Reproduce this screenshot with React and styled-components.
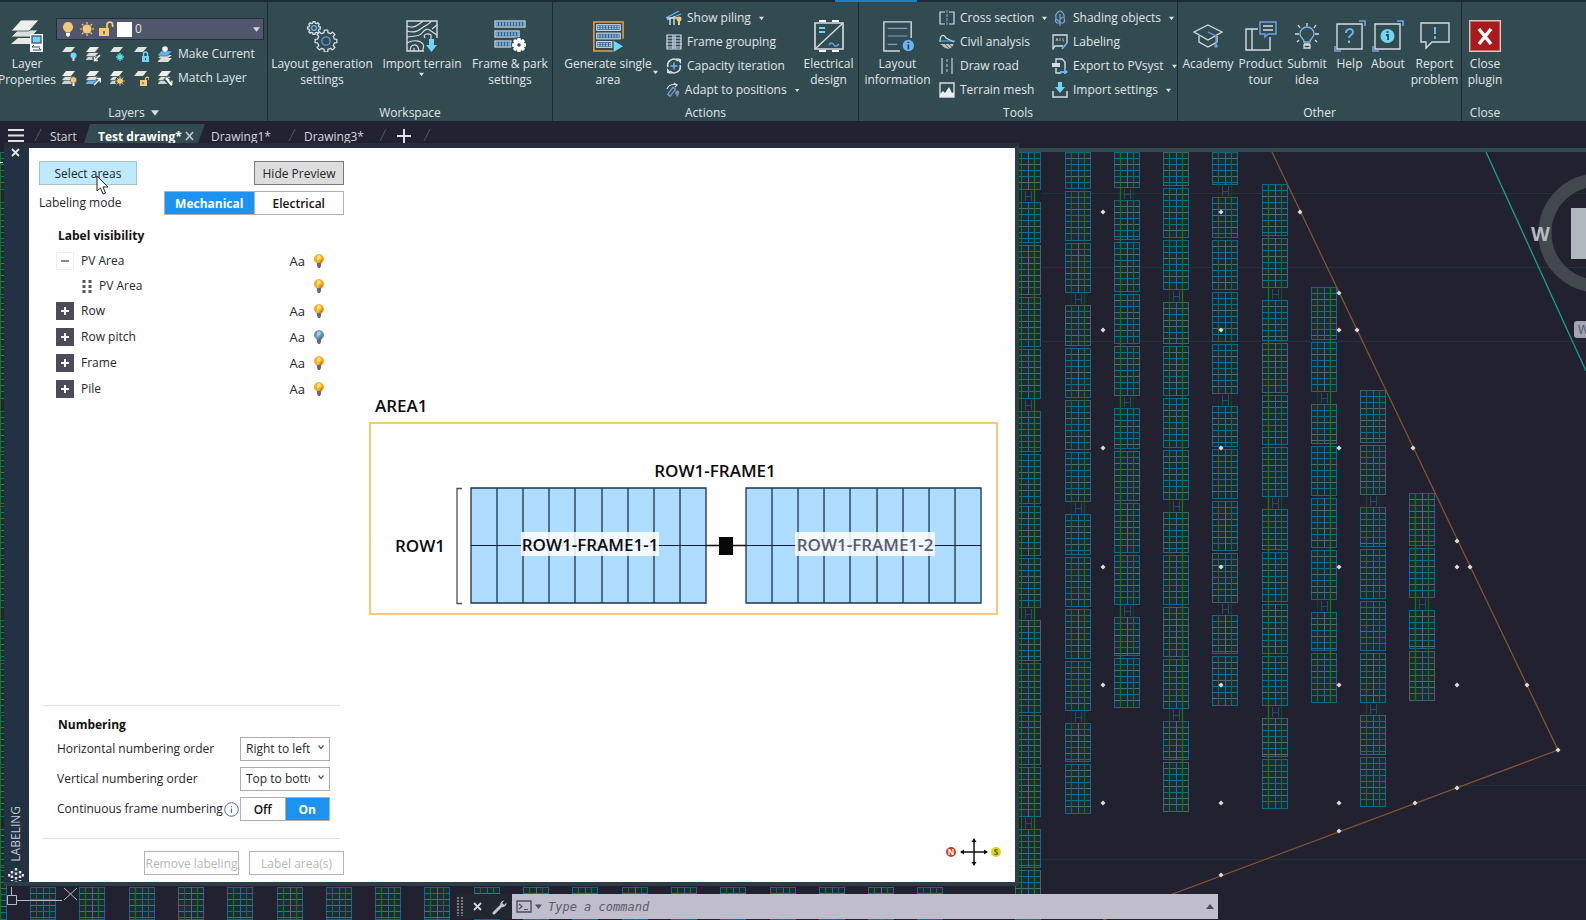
import React, { useState } from 'react';
import styled, { createGlobalStyle, css } from 'styled-components';

const GlobalStyle = createGlobalStyle`
    * {
        box-sizing: border-box;
    }

    body {
        margin: 0;
        background: #21212f;
        font-family: 'Open Sans', 'Noto Sans', sans-serif;
        font-size: 12px;
        line-height: 16px;
    }

    button, select, input {
        font: inherit;
        color: inherit;
        margin: 0;
    }
`;

/* ---------- icons ---------- */

const W = '#d5dce4';
const B = '#68b5f5';
const SKY = '#6fd6f5';
const AMBER = '#f3c877';

const Svg = ({ size = 16, children, ...rest }) => (
    <svg width={size} height={size} viewBox={`0 0 ${size} ${size}`} fill="none" aria-hidden="true" {...rest}>
        {children}
    </svg>
);

const Caret = ({ size = 5, color = '#d5dce4' }) => (
    <svg width={size} height={size} viewBox="0 0 6 6" aria-hidden="true">
        <path d="M0 1h6L3 5z" fill={color} />
    </svg>
);

const Sheet = ({ y = 1, fill = '#e3e3e1' }) => <path d={`M5 ${y}h9l-4 5H1z`} fill={fill} />;

const Sheets = ({ blue }) => (
    <>
        <path d="M1 13l3-3h10l-4 4H1z" fill={blue ? B : '#cfcfcc'} />
        <path d="M1 9.500l3-3h10l-4 4H1z" fill="#dcdcd8" stroke="#324b50" strokeWidth=".6" />
        <Sheet fill="#eeeeea" />
    </>
);

const Gear = ({ cx, cy, r, color, inner, fill = 'none' }) => (
    <g stroke={color} fill={fill} strokeWidth="1.300" strokeLinejoin="round">
        <path
            d={Array.from({ length: 8 }, (_, i) => {
                const at = (deg, rad) => {
                    const a = (deg * Math.PI) / 180;
                    return `${(cx + rad * Math.cos(a)).toFixed(2)} ${(cy + rad * Math.sin(a)).toFixed(2)}`;
                };
                const d = i * 45;
                return `${i ? 'L' : 'M'}${at(d - 13, r * 0.78)}L${at(d - 9, r)}L${at(d + 9, r)}L${at(d + 13, r * 0.78)}`;
            }).join('') + 'Z'}
        />
        <circle cx={cx} cy={cy} r={r * 0.38} stroke={inner} fill={fill === 'none' ? 'none' : '#324b50'} />
    </g>
);

const PanelStrip = ({ x, y, w }) => (
    <>
        <rect x={x} y={y} width={w} height="6" fill="#2f6088" stroke={W} strokeWidth="1.200" />
        <path d={`M${x + 1} ${y + 3}h${w - 2}`} stroke="#9fd0f5" strokeWidth="3" strokeDasharray="2 1" />
        <path d={`M${x + 1} ${y + 3}h${w - 2}`} stroke="#2f6088" strokeWidth=".7" />
    </>
);

const icons = {
    layerProps: (
        <Svg size={32}>
            <path d="M0 24l7-6h20l-6 6z" fill="#e8e8e4" />
            <path d="M0 17l7-7h20l-7 7z" fill="#dededa" stroke="#324b50" strokeWidth=".8" />
            <path d="M0 11L10 0h18L18 11z" fill="#eeeeea" stroke="#324b50" strokeWidth=".8" />
            <rect x="19" y="14" width="13" height="18" fill="#f8fafa" />
            <rect x="21" y="16" width="9" height="7" fill={SKY} stroke="#34475c" strokeWidth="1.200" />
            <path d="M21 27h8M23 25l-2 2M22 30h8M28 28l2 2" stroke="#34475c" />
        </Svg>
    ),
    bulb: (
        <Svg>
            <path d="M8 1a5 5 0 0 1 3 9l-1 1.500H6L5 10a5 5 0 0 1 3-9z" fill={AMBER} />
            <path d="M6 12h4v2.500L8 16l-2-1.500z" fill="#f4f4f4" />
        </Svg>
    ),
    sun: (
        <Svg>
            <circle cx="8" cy="8" r="4.500" fill={AMBER} />
            <path d="M8 1v2M8 13v2M1 8h2M13 8h2M3 3l1.500 1.500M11.500 11.500L13 13M13 3l-1.500 1.500M4.500 11.500L3 13" stroke={AMBER} strokeWidth="1.200" />
        </Svg>
    ),
    unlock: (
        <Svg>
            <rect x="1" y="7" width="10" height="8" fill={AMBER} />
            <path d="M9 7V4a2.800 2.800 0 0 1 5.600 0v2" stroke={AMBER} strokeWidth="1.800" />
            <path d="M6 10v3" stroke="#4a5068" strokeWidth="1.500" />
        </Svg>
    ),
    layerOff: (
        <Svg>
            <Sheet />
            <circle cx="12.500" cy="9.500" r="3" fill={SKY} />
            <path d="M11.500 12h2v3h-2z" fill={W} />
        </Svg>
    ),
    layerIso: (
        <Svg>
            <Sheets />
            <path d="M15 9l-5 5M9 11v4h4" stroke="#324b50" strokeWidth="3" />
            <path d="M15 9l-5 5M9.500 11v3.500H13" stroke="#fff" strokeWidth="1.500" />
        </Svg>
    ),
    layerFreeze: (
        <Svg>
            <Sheet />
            <path d="M11 7v8M7 11h8M8.500 8.500l5 5M13.500 8.500l-5 5" stroke="#5fe0e0" strokeWidth="1.400" />
        </Svg>
    ),
    layerLock: (
        <Svg>
            <Sheet />
            <rect x="9" y="10" width="7" height="6" fill={SKY} />
            <path d="M10.500 10V8a2 2 0 0 1 4 0v2" stroke={SKY} strokeWidth="1.400" />
            <path d="M12.500 12v2" stroke="#324b50" />
        </Svg>
    ),
    makeCurrent: (
        <Svg>
            <path d="M1 15l3-3h11l-4 4H1zM1 12l3-3h11l-4 3z" fill="#dcdcd8" />
            <path d="M1 9l3-4h11l-4 5H1z" fill="#5eb3f0" stroke="#324b50" strokeWidth=".5" />
            <circle cx="8" cy="3" r="2.800" fill="#f4f4f4" />
        </Svg>
    ),
    layerOn: (
        <Svg>
            <Sheets />
            <circle cx="12.500" cy="10" r="3.200" fill={AMBER} stroke="#324b50" strokeWidth=".5" />
            <path d="M11.500 13h2v3h-2z" fill="#fff" />
        </Svg>
    ),
    layerUniso: (
        <Svg>
            <Sheets blue />
            <path d="M9 15l6-6M11.500 8.500H15.500V12.500" stroke="#324b50" strokeWidth="3" />
            <path d="M9 15l6-6M11.500 8.500H15.500V12.500" stroke="#fff" strokeWidth="1.500" />
        </Svg>
    ),
    layerThaw: (
        <Svg>
            <Sheets />
            <circle cx="11" cy="11" r="5" fill="#324b50" />
            <circle cx="11" cy="11" r="2.800" fill={AMBER} />
            <path d="M11 6v10M6 11h10M7.500 7.500l7 7M14.500 7.500l-7 7" stroke={AMBER} strokeWidth=".8" />
        </Svg>
    ),
    layerUnlock: (
        <Svg>
            <Sheet />
            <rect x="7" y="10" width="7" height="6" fill={AMBER} />
            <path d="M12.500 10V8.500a1.800 1.800 0 0 1 3.500 0V10" stroke={AMBER} strokeWidth="1.200" />
            <path d="M10 12v2" stroke="#324b50" />
        </Svg>
    ),
    matchLayer: (
        <Svg>
            <Sheets />
            <path d="M8 8l6 6" stroke="#324b50" strokeWidth="5" />
            <path d="M9 8l3 3" stroke="#fff" strokeWidth="2.500" />
            <path d="M12 13l3-3 1 2-2 4z" fill={AMBER} />
            <path d="M11 11l4 4" stroke="#fff" strokeWidth="2" />
        </Svg>
    ),
    gears: (
        <Svg size={32}>
            <Gear cx={8} cy={8} r={6.5} color={W} inner={B} />
            <Gear cx={20} cy={21} r={11} color={W} inner="#5c9be0" />
        </Svg>
    ),
    terrain: (
        <Svg size={32}>
            <path d="M18 31H1V1h30v17" stroke={W} strokeWidth="1.400" />
            <path
                d="M1 6c7 3 11-1 16-5M1 11c10 3 13-2 18-5s5-3 6-5M1 17c6-1 12 0 15-4s6-5 9-2l6 4M26 9l5-4M1 23c7-4 14-2 16 1s-1 5 0 7M4 31c0-6 5-8 8-4l1 4M8 31v-3M19 18c-3-4 3-5 6-3v4"
                stroke={W}
                strokeWidth="1.200"
            />
            <path d="M23 19h5v6h3l-5.500 7L20 25h3z" fill={SKY} />
        </Svg>
    ),
    framePark: (
        <Svg size={32}>
            <PanelStrip x={1} y={1} w={30} />
            <PanelStrip x={1} y={11} w={24} />
            <PanelStrip x={1} y={21} w={16} />
            <circle cx="25" cy="25" r="8" fill="#324b50" />
            <Gear cx={25} cy={25} r={6.5} color="#fff" inner="#fff" fill="#fff" />
        </Svg>
    ),
    generate: (
        <Svg size={34}>
            <path d="M22 33H2V2h31v18" stroke="#e0a44e" strokeWidth="1.600" />
            <PanelStrip x={5} y={5} w={25} />
            <PanelStrip x={5} y={14} w={25} />
            <PanelStrip x={5} y={23} w={16} />
            <path d="M23 22l10 6-10 6z" fill={SKY} />
        </Svg>
    ),
    piling: (
        <Svg>
            <path d="M0 8L13 1M1 10L15 4" stroke={B} strokeWidth="1.300" />
            <path d="M4 8v7M8 6v9M1 8h14" stroke={W} strokeWidth="1.400" />
            <circle cx="13" cy="9" r="2.500" fill={AMBER} />
            <path d="M12 11h2v4h-2z" fill={AMBER} />
        </Svg>
    ),
    grouping: (
        <Svg>
            <path d="M1 1h6v14H1zM9 1h6v14H9zM1 4h14M1 7h14M0 10h16M1 13h14" stroke={W} strokeWidth="1.200" />
            <path d="M8 0v16" stroke={B} />
        </Svg>
    ),
    capacity: (
        <Svg>
            <path d="M2 9a6 6 0 0 1 10-6M14 7a6 6 0 0 1-10 6" stroke={W} strokeWidth="1.600" />
            <path d="M10 0l5 1v5zM6 16l-5-1v-5z" fill={W} />
            <path d="M8 4.500v7M4.500 8h7" stroke={B} strokeWidth="1.500" />
        </Svg>
    ),
    adapt: (
        <Svg>
            <path d="M1 7c2-5 6-6 11-5M9 0l4 2-3 3" stroke={W} strokeWidth="1.200" />
            <path d="M2 13l6-8 3 2-6 8z" stroke="#6f9fd8" strokeWidth="1.500" />
            <circle cx="13" cy="11" r="2.300" fill="#8c98a0" />
            <path d="M11 13h4l-2 3z" fill="#8c98a0" />
        </Svg>
    ),
    electrical: (
        <Svg size={32}>
            <path d="M2 3h28v26H2z" stroke={W} strokeWidth="1.600" />
            <path d="M6 1h7M19 1h7M6 31h7M19 31h7" stroke="#fff" strokeWidth="2" />
            <path d="M2 29L30 3" stroke={W} strokeWidth="1.400" />
            <path d="M6 8h6M6 12h6" stroke={SKY} strokeWidth="1.800" />
            <path d="M16 25c2-3 4-2 5 0s3 1 5-1" stroke="#6f9fe0" strokeWidth="1.500" />
        </Svg>
    ),
    layoutInfo: (
        <Svg size={34}>
            <path d="M19 33H2V2h29v17" stroke={W} strokeWidth="1.500" />
            <path d="M6 9h21M6 17h21M6 26h10" stroke="#7fa2cc" strokeWidth="1.300" />
            <circle cx="28" cy="27" r="6" fill={B} />
            <path d="M28 26v5M28 23v1.500" stroke="#24425c" strokeWidth="1.800" />
        </Svg>
    ),
    cross: (
        <Svg>
            <path d="M6 2H1v12h5M10 2h5v12h-5" stroke={W} strokeWidth="1.200" />
            <path d="M8 0v16" stroke={B} strokeDasharray="3 1" />
        </Svg>
    ),
    civil: (
        <Svg>
            <path d="M1 8c0-8 4-8 6-4l8 4" stroke={W} strokeWidth="1.300" />
            <path d="M0 7h16" stroke={B} />
            <path d="M1 10h14l-2 3-3 2-4-1z" fill="#b9bdc0" />
            <path d="M2 11l3 3M6 10l5 5M10 10l3 3" stroke="#324b50" strokeWidth=".7" />
        </Svg>
    ),
    road: (
        <Svg>
            <path d="M3 0v16M13 0v16" stroke="#a7b6c2" strokeWidth="1.500" />
            <path d="M8 1v14" stroke="#8fb2dd" strokeWidth="1.300" strokeDasharray="3 2" />
        </Svg>
    ),
    mesh: (
        <Svg>
            <path d="M1 1h14v14H1z" stroke={W} strokeWidth="1.400" />
            <path d="M1 15v-3l3-3 2 2 4-6 3 6 2-1v5z" fill="#e8eef0" />
        </Svg>
    ),
    tree: (
        <Svg>
            <path d="M8 16V4M8 9l3-2M8 12L4 9M5 13c-3-2-1-4-1-5s-1-3 1-5 4-3 6 0 1 4 1 5 2 3-1 5z" stroke="#7ba4d8" strokeWidth="1.200" />
        </Svg>
    ),
    labeling: (
        <Svg>
            <path d="M11 12H3l-2 3V1h14v8" stroke={W} strokeWidth="1.300" />
            <path d="M4 7l1-3 1 3M8 4v3M11 4v3h1" stroke="#a0a9b0" />
            <path d="M15 9l-5 6" stroke={B} strokeWidth="1.600" />
        </Svg>
    ),
    exportPv: (
        <Svg>
            <path d="M4 5V1h6l3 3v7M4 10v5h5" stroke={W} strokeWidth="1.400" />
            <path d="M0 5h8v4H0z" fill={W} />
            <path d="M8 13h4v-3l4 4-4 3v-2H8z" fill={B} />
        </Svg>
    ),
    importSet: (
        <Svg>
            <path d="M1 9v6h14V9" stroke={W} strokeWidth="1.500" />
            <path d="M6 0h4v5h3l-5 6-5-6h3z" fill={SKY} />
        </Svg>
    ),
    academy: (
        <Svg size={32}>
            <path d="M16 5l14 7-14 8-14-8zM7 16v6l9 5 9-5v-6" stroke={W} strokeWidth="1.300" />
            <path d="M16 12l8 4v9" stroke="#6f9fd8" strokeWidth="1.300" />
            <circle cx="24" cy="26" r="1.800" fill="#6f9fd8" />
        </Svg>
    ),
    tour: (
        <Svg size={32}>
            <path d="M13 9H1v21h24V17M7 9v21" stroke={W} strokeWidth="1.400" />
            <path d="M15 2h16v12h-8l-3 3v-3h-5z" stroke="#6ea5e6" strokeWidth="1.400" />
            <path d="M18 6h10M18 10h10" stroke={W} strokeWidth="1.300" />
        </Svg>
    ),
    idea: (
        <Svg size={32}>
            <path d="M13 22c0-4-4-4-4-8a7 7 0 0 1 14 0c0 4-4 4-4 8z" stroke="#7db4ea" strokeWidth="1.400" />
            <path d="M13 24h6M13 28h6v-3h-6z" stroke={W} strokeWidth="1.300" />
            <path d="M16 3v3M8 14H4M28 14h-4M7 5l2 3M25 5l-2 3M6 22l2-2M26 22l-2-2" stroke={W} strokeWidth="1.300" />
        </Svg>
    ),
    help: (
        <Svg size={32}>
            <path d="M3 4h25v25H3z" stroke={W} strokeWidth="1.400" />
            <path d="M25 1h6v5M1 26v5h6" stroke="#6ea5e6" strokeWidth="1.600" />
            <path d="M12 13c0-5 7-5 7-1 0 3-4 3-4 6M15 20.500v2.500" stroke={B} strokeWidth="2" />
        </Svg>
    ),
    about: (
        <Svg size={32}>
            <path d="M3 4h25v25H3z" stroke={W} strokeWidth="1.400" />
            <path d="M25 1h6v5M1 26v5h6" stroke="#6ea5e6" strokeWidth="1.600" />
            <circle cx="15.500" cy="16" r="7" fill={SKY} />
            <path d="M14 15h2v5M15.500 11v2" stroke="#2c4a66" strokeWidth="1.800" />
        </Svg>
    ),
    report: (
        <Svg size={32}>
            <path d="M2 3h28v19H13l-6 6v-6H2z" stroke={W} strokeWidth="1.400" />
            <path d="M16 7v7M16 16v3" stroke={B} strokeWidth="2" />
        </Svg>
    ),
    closePlugin: (
        <Svg size={32}>
            <path d="M0 0h32v32H0z" fill="#a81a1c" />
            <path d="M.7.700h30.600v30.600H.7z" stroke="#d8c4c4" strokeWidth="1.400" />
            <path d="M10 9l12 15M22 9L10 24" stroke="#fff" strokeWidth="3.400" />
        </Svg>
    ),
};

const TreeBulb = ({ on }) => (
    <svg width="10" height="14" viewBox="0 0 10 14" aria-hidden="true">
        <path d="M5 0a5 5 0 0 1 4 8l-2 2H3L1 8a5 5 0 0 1 4-8z" fill={on ? '#eeb22e' : '#6f98b4'} />
        <path d="M3 2l3-1 1 3-4 3z" fill={on ? '#fbe07a' : '#a9cbe0'} />
        <path d="M9 3l-1 5-2 2H4l4-5z" fill={on ? '#e0761c' : '#4f7690'} />
        <path d="M3 9h4v3l-1 2H4l-1-2z" fill="#6a6a70" />
    </svg>
);

/* ---------- ribbon ---------- */

const Page = styled.div`
    min-height: 100vh;
    display: flex;
    flex-direction: column;
    overflow: hidden;
`;

const TopEdge = styled.div`
    height: 2px;
    background: linear-gradient(90deg, transparent 835px, #1a82c4 835px 917px, transparent 917px), #1c2a36;
`;

const Ribbon = styled.header`
    height: 119px;
    display: flex;
    background: #324b50;
    color: #e0e5e8;
`;

const Group = styled.section`
    flex: none;
    display: flex;
    flex-direction: column;
    padding-top: 4px;
    border-right: 1px solid ${({ $last }) => ($last ? 'transparent' : '#212736')};
`;

const GroupBody = styled.div`
    flex: 1;
    display: flex;
`;

const GroupName = styled.h2`
    margin: 0;
    height: 17px;
    font-size: 12px;
    font-weight: 400;
    display: flex;
    justify-content: center;
    align-items: center;
    gap: 6px;
`;

const bare = css`
    border: 0;
    padding: 0;
    background: none;
    cursor: pointer;
`;

const LargeButton = styled.button`
    ${bare}
    width: ${({ $width }) => $width}px;
    padding-top: 14px;
    display: flex;
    flex-direction: column;
    align-items: center;
    gap: 4px;

    > svg {
        height: 32px;
        flex: none;
    }
`;

const LargeText = styled.span`
    display: flex;
    flex-direction: column;
    align-items: center;
    white-space: nowrap;
`;

const SmallColumn = styled.div`
    width: ${({ $width }) => $width}px;
    padding-left: 3px;
    display: flex;
    flex-direction: column;
`;

const SmallButton = styled.button`
    ${bare}
    height: 24px;
    display: flex;
    align-items: center;
    gap: 5px;
    white-space: nowrap;

    > span + svg {
        margin-left: 3px;
    }
`;

const LayerTools = styled.div`
    width: 213px;
    padding: 12px 0 0 2px;
    display: flex;
    flex-direction: column;
    gap: 1px;
`;

const LayerCombo = styled.div`
    width: 208px;
    height: 22px;
    margin-bottom: 1px;
    padding: 0 3px;
    display: flex;
    align-items: center;
    gap: 3px;
    background: #50566b;
    border: 1px solid #262c3e;

    select {
        ${bare}
        flex: 1;
        appearance: none;
        outline: none;
    }
`;

const Swatch = styled.span`
    width: 15px;
    height: 15px;
    background: #fff;
`;

const LayerRow = styled.div`
    height: 23px;
    padding-left: 5px;
    display: flex;
    align-items: center;
    gap: 8px;
`;

const IconButton = styled.button`
    ${bare}
    display: flex;
    align-items: center;
    gap: 5px;
    white-space: nowrap;
`;

const Large = ({ icon, lines, width, caret }) => (
    <LargeButton type="button" $width={width}>
        {icons[icon]}
        <LargeText>
            {lines.map((line) => <span key={line}>{line}</span>)}
            {caret && <Caret />}
        </LargeText>
    </LargeButton>
);

const Small = ({ icon, text, caret }) => (
    <SmallButton type="button">
        {icons[icon]}
        <span>{text}</span>
        {caret && <Caret />}
    </SmallButton>
);

const SplitButton = styled.div`
    width: 110px;
    display: grid;

    > * {
        grid-area: 1 / 1;
    }
`;

const SplitCaret = styled.button`
    ${bare}
    align-self: start;
    justify-self: end;
    margin: 64px 5px 0 0;
    display: flex;
`;

const LayersGroup = () => (
    <Group>
        <GroupBody>
            <Large icon="layerProps" lines={['Layer', 'Properties']} width={54} />
            <LayerTools>
                <LayerCombo>
                    {icons.bulb}
                    {icons.sun}
                    {icons.unlock}
                    <Swatch />
                    <select aria-label="Current layer">
                        <option>0</option>
                    </select>
                    <Caret size={7} />
                </LayerCombo>
                <LayerRow>
                    {['layerOff', 'layerIso', 'layerFreeze', 'layerLock'].map((name) => (
                        <IconButton key={name} type="button" aria-label={name}>{icons[name]}</IconButton>
                    ))}
                    <IconButton type="button">{icons.makeCurrent} Make Current</IconButton>
                </LayerRow>
                <LayerRow>
                    {['layerOn', 'layerUniso', 'layerThaw', 'layerUnlock'].map((name) => (
                        <IconButton key={name} type="button" aria-label={name}>{icons[name]}</IconButton>
                    ))}
                    <IconButton type="button">{icons.matchLayer} Match Layer</IconButton>
                </LayerRow>
            </LayerTools>
        </GroupBody>
        <GroupName>Layers <Caret size={8} /></GroupName>
    </Group>
);

const RibbonBar = () => (
    <Ribbon>
        <LayersGroup />
        <Group>
            <GroupBody>
                <Large icon="gears" lines={['Layout generation', 'settings']} width={108} />
                <Large icon="terrain" lines={['Import terrain']} width={92} caret />
                <Large icon="framePark" lines={['Frame & park', 'settings']} width={84} />
            </GroupBody>
            <GroupName>Workspace</GroupName>
        </Group>
        <Group>
            <GroupBody>
                <SplitButton>
                    <Large icon="generate" lines={['Generate single', 'area']} width={110} />
                    <SplitCaret type="button" aria-label="Generate options"><Caret /></SplitCaret>
                </SplitButton>
                <SmallColumn $width={136}>
                    <Small icon="piling" text="Show piling" caret />
                    <Small icon="grouping" text="Frame grouping" />
                    <Small icon="capacity" text="Capacity iteration" />
                    <Small icon="adapt" text="Adapt to positions" caret />
                </SmallColumn>
                <Large icon="electrical" lines={['Electrical', 'design']} width={59} />
            </GroupBody>
            <GroupName>Actions</GroupName>
        </Group>
        <Group>
            <GroupBody>
                <Large icon="layoutInfo" lines={['Layout', 'information']} width={77} />
                <SmallColumn $width={113}>
                    <Small icon="cross" text="Cross section" caret />
                    <Small icon="civil" text="Civil analysis" />
                    <Small icon="road" text="Draw road" />
                    <Small icon="mesh" text="Terrain mesh" />
                </SmallColumn>
                <SmallColumn $width={128}>
                    <Small icon="tree" text="Shading objects" caret />
                    <Small icon="labeling" text="Labeling" />
                    <Small icon="exportPv" text="Export to PVsyst" caret />
                    <Small icon="importSet" text="Import settings" caret />
                </SmallColumn>
            </GroupBody>
            <GroupName>Tools</GroupName>
        </Group>
        <Group>
            <GroupBody>
                <Large icon="academy" lines={['Academy']} width={60} />
                <Large icon="tour" lines={['Product', 'tour']} width={45} />
                <Large icon="idea" lines={['Submit', 'idea']} width={48} />
                <Large icon="help" lines={['Help']} width={37} />
                <Large icon="about" lines={['About']} width={40} />
                <Large icon="report" lines={['Report', 'problem']} width={53} />
            </GroupBody>
            <GroupName>Other</GroupName>
        </Group>
        <Group $last>
            <GroupBody>
                <Large icon="closePlugin" lines={['Close', 'plugin']} width={46} />
            </GroupBody>
            <GroupName>Close</GroupName>
        </Group>
    </Ribbon>
);

/* ---------- file tabs ---------- */

const TabBar = styled.nav`
    height: 22px;
    padding-top: 3px;
    display: flex;
    overflow: hidden;
    background: #222232;
    color: #d3d8dc;
`;

const Burger = styled.button`
    ${bare}
    width: 32px;
    padding: 5px 8px 0;
    display: flex;
`;

const Tab = styled.button`
    ${bare}
    width: ${({ $width }) => $width}px;
    padding: 5px 0 0 ${({ $active }) => ($active ? 14 : 6)}px;
    display: flex;
    align-items: flex-start;
    justify-content: space-between;
    text-align: left;
    white-space: nowrap;

    ${({ $active }) => $active && css`
        padding-right: 11px;
        color: #fff;
        font-weight: 700;
        background: #324b50;
        clip-path: polygon(6px 0, 100% 0, calc(100% - 7px) 100%, 0 100%);
    `}
`;

const Slash = () => (
    <svg width="12" height="19" aria-hidden="true">
        <path d="M9 5L3 17" stroke="#46606a" />
    </svg>
);

const TabStrip = () => (
    <TabBar>
        <Burger type="button" aria-label="Menu">
            <svg width="16" height="13">
                <path d="M0 1h16M0 6.500h16M0 12h16" stroke="#dfe3e6" strokeWidth="2" />
            </svg>
        </Burger>
        <Slash />
        <Tab type="button" $width={40}>Start</Tab>
        <Tab type="button" $width={121} $active>
            Test drawing*
            <svg width="9" height="16">
                <path d="M1 3l7 8M8 3l-7 8" stroke="#b9c3c8" strokeWidth="1.800" />
            </svg>
        </Tab>
        <Tab type="button" $width={81}>Drawing1*</Tab>
        <Slash />
        <Tab type="button" $width={79}>Drawing3*</Tab>
        <Slash />
        <Burger type="button" aria-label="New drawing">
            <svg width="14" height="14">
                <path d="M0 7h14M7 0v14" stroke="#dfe3e6" strokeWidth="2" />
            </svg>
        </Burger>
        <Slash />
    </TabBar>
);

/* ---------- CAD drawing behind the windows ---------- */

// x, top, joints between tracker rows, bottom, left and right cable strength
const trackers = [
    [-19, 152, [190, 399, 608, 817], 920, 0.8, 0.8],
    [1015, 152, [190, 399, 608, 817], 920, 0.8, 1],
    [1065, 152, [293, 502, 711], 814, 0.2, 0.5],
    [1114, 152, [188, 396, 605], 708, 1, 0.3],
    [1163, 152, [290, 500, 709], 812, 0.4, 1],
    [1212, 152, [185, 394, 603], 706, 0.2, 0.3],
    [1262, 184, [288, 497, 706], 809, 1, 0.4],
    [1311, 287, [392, 600], 703, 0.3, 1],
    [1360, 390, [495, 703], 807, 0.4, 0.2],
    [1409, 493, [598], 701, 1, 0.8],
];

const bottomRows = Array.from({ length: 19 }, (_, i) => Math.round(30 + i * 49.3));

const points = [
    ...[212, 330, 448, 567, 685, 803].flatMap((y) => [[1103, y], [1221, y]]),
    ...[330, 448, 567, 685, 803].map((y) => [1339, y]),
    [1457, 567], [1457, 685],
    [1300, 212], [1339, 293], [1357, 330], [1413, 448], [1457, 541], [1470, 567], [1527, 685],
    [1558, 750], [1457, 788], [1415, 803], [1339, 831], [1221, 875],
];

const splitTables = (from, to) => {
    const tables = [];
    let end = to;
    while (end - from > 4) {
        const start = end - from < 60 ? from : end - 50;
        tables.push([start, end]);
        end = start - 2;
    }
    return tables;
};

const Table = ({ x, y, end }) => {
    const lines = [];
    for (let i = 1, ly = y + 6; ly < end - 2; i += 1, ly += 6) {
        const blue = (i * 7 + x * 3 + y * 5) % 11 > 4;
        lines.push(<path key={i} d={`M${x} ${ly + 0.5}h26`} stroke={blue ? '#0f7299' : '#566b73'} />);
    }
    const edge = (x + y) % 5 ? '#11678c' : '#43606b';
    return (
        <g>
            <rect x={x + 0.5} y={y + 0.5} width="25" height={end - y - 1} fill="#1b2c34" stroke={edge} />
            {lines}
            <path d={`M${x + 6.5} ${y}V${end}M${x + 19.5} ${y}V${end}`} stroke="#3a545c" />
            <path d={`M${x + 13.5} ${y}V${end}`} stroke={(x + y) % 3 ? '#147099' : '#546b73'} />
        </g>
    );
};

const Tracker = ({ x, top, joints, bottom, left, right }) => {
    const starts = [top, ...joints.map((j) => j + 12)];
    const ends = [...joints, bottom];
    return (
        <g>
            {starts.map((s, i) =>
                splitTables(s, ends[i]).map(([a, b]) => <Table key={a} x={x} y={a} end={b} />)
            )}
            {joints.map((j) => (
                <path key={j} d={`M${x + 10.5} ${j + 1}v10M${x + 16.5} ${j + 1}v10M${x + 10} ${j + 6.5}h6`} stroke="#1e5067" />
            ))}
            <path d={`M${x + 6.5} ${top}V${bottom}`} stroke="#078008" strokeWidth="1.300" opacity={left} />
            <path d={`M${x + 19.5} ${top}V${bottom}`} stroke="#078008" strokeWidth="1.300" opacity={right} />
        </g>
    );
};

const DrawingSvg = styled.svg`
    position: absolute;
    inset: 0;
    width: 100%;
    height: 100%;
    background: #21212f;
`;

const Drawing = () => (
    <DrawingSvg aria-hidden="true">
        <g transform="translate(0 -143)">
            <path d="M1015 148H4000v4H1015z" fill="#324b50" />
            <path d="M1042 193.500H4000M1042 267.500H4000M1042 341.500H4000M1450 785.500H4000M1042 859.500H4000" stroke="#253338" />
            {trackers.map(([x, top, joints, bottom, left, right]) => (
                <Tracker key={x} x={x} top={top} joints={joints} bottom={bottom} left={left} right={right} />
            ))}
            {bottomRows.map((x, i) => (
                <Tracker key={x} x={x} top={887} joints={[]} bottom={920} left={i % 3 ? 0.9 : 0.2} right={i % 2 ? 0.9 : 0.3} />
            ))}
            <path d="M1272 152L1558 750 1103 920" fill="none" stroke="#83542b" strokeWidth="1.300" />
            <path d="M1486 152l100 219" stroke="#17a08f" strokeWidth="1.300" />
            {points.map(([x, y]) => (
                <path key={`${x}-${y}`} d={`M${x} ${y - 2.5}l2.500 2.500-2.500 2.500-2.500-2.500z`} fill="#dcdcd8" />
            ))}
            <path d="M0 162.500h3" stroke="#fff" />
            <path d="M7.500 895.500h9v9h-9zM11.500 887v8M16 900.500h46M64 888l13 12M77 888L64 900" fill="none" stroke="#b4bcc0" />
            <circle cx="1598" cy="233" r="53" fill="none" stroke="#41494f" strokeWidth="13" />
            <path d="M1571 208h50v51h-50z" fill="#b1b9be" />
            <rect x="1574" y="321" width="40" height="17" rx="3" fill="#a3a5b5" />
            <text x="1578" y="334" fontSize="12" fill="#4f5462">W</text>
            <text x="1531" y="241" fontSize="20" fontWeight="700" fontFamily="Liberation Sans, sans-serif" fill="#b9bac4">W</text>
        </g>
    </DrawingSvg>
);

/* ---------- labeling palette ---------- */

const Workspace = styled.main`
    flex: 1;
    position: relative;
    display: flex;
    flex-direction: column;
    gap: 8px;
    padding-bottom: 1px;
`;

const Palette = styled.section`
    position: relative;
    flex: 1;
    width: 64%;
    margin-left: 4px;
    display: flex;
    border: solid #2d3c47;
    border-width: 5px 4px 4px 0;
    border-top-color: #292d39;
    background: #fefefe;
    color: #22272c;
`;

const PaletteBar = styled.div`
    width: 25px;
    padding: 0 2px 0 0;
    display: flex;
    flex-direction: column;
    align-items: center;
    background: #223242;
    color: #c3cad0;
`;

const PaletteTitle = styled.h1`
    margin: auto 0 6px;
    font-size: 12px;
    font-weight: 400;
    line-height: 16px;
    writing-mode: vertical-rl;
    transform: rotate(180deg);
`;

const Side = styled.div`
    width: 316px;
    padding: 13px 1px 7px 10px;
    display: flex;
    flex-direction: column;
`;

const Split = styled.div`
    display: flex;
    align-items: center;
    justify-content: space-between;
    margin-bottom: 6px;
`;

const Button = styled.button`
    width: ${({ $width }) => $width}px;
    height: 24px;
    padding: 2px 0 0;
    white-space: nowrap;
    border: 1px solid #b0b3b4;
    background: #fefefe;

    ${({ $tone }) => $tone === 'hover' && css`
        background: #bfeafd;
        border-color: #a5c3cc;
    `}

    ${({ $tone }) => $tone === 'pressed' && css`
        background: #dddddd;
        border-color: #757b7e;
    `}

    &:disabled {
        color: #b3bab2;
    }
`;

const ButtonWithCursor = styled.div`
    position: relative;

    svg {
        position: absolute;
        left: 57px;
        top: 14px;
    }
`;

const Segments = styled.div`
    width: ${({ $width }) => $width}px;
    height: 24px;
    display: flex;
    border: 1px solid #b3b0b2;

    label {
        flex: 1;
        padding-top: 1px;
        display: flex;
        align-items: center;
        justify-content: center;
        color: #111;
        font-weight: 600;
        cursor: pointer;
    }

    label + label {
        border-left: 1px solid #b3b0b2;
    }

    label:has(input:checked) {
        color: #fff;
        font-weight: 700;
        background: #1c93f0;
    }

    input {
        position: absolute;
        opacity: 0;
        pointer-events: none;
    }
`;

const Heading = styled.h2`
    margin: ${({ $spaced }) => ($spaced ? 7 : 0)}px 0 4px 19px;
    font-size: 12px;
    line-height: 16px;
    font-weight: 700;
    color: #111;
`;

const Tree = styled.ul`
    list-style: none;
    margin: 0;
    padding: 0 20px 0 17px;
`;

const TreeRow = styled.li`
    height: ${({ $child }) => ($child ? 24 : 26)}px;
    padding-left: ${({ $child }) => ($child ? 26 : 0)}px;
    display: flex;
    align-items: center;
    gap: 7px;
`;

const Name = styled.span`
    flex: 1;
`;

const Toggle = styled.button`
    ${bare}
    width: 18px;
    height: 18px;
    display: grid;
    place-items: center;
    border: 1px solid ${({ $open }) => ($open ? '#eeeeee' : '#4d4b57')};
    background: ${({ $open }) => ($open ? '#fff' : '#4d4b57')};
    color: ${({ $open }) => ($open ? '#808890' : '#fff')};
`;

const FontButton = styled.button`
    ${bare}
    font-size: 13px;
    margin-right: 2px;
`;

const BulbButton = styled.button`
    ${bare}
    width: 10px;
    display: flex;
`;

const Numbering = styled.div`
    margin: auto 4px 12px 3px;
    padding: 11px 10px 17px 15px;
    border-top: 1px solid #dfeadd;
    border-bottom: 1px solid #dbe2ea;
    display: flex;
    flex-direction: column;
    gap: 6px;

    h2 {
        margin: 0 0 -2px 1px;
    }
`;

const Field = styled.div`
    height: 24px;
    display: flex;
    align-items: center;
    justify-content: space-between;
    white-space: nowrap;
`;

const SelectBox = styled.div`
    width: 90px;
    display: grid;
    align-items: center;

    > * {
        grid-area: 1 / 1;
    }

    select {
        appearance: none;
        width: 100%;
        height: 24px;
        padding: 0 19px 0 5px;
        border: 1px solid #b0acae;
        border-radius: 0;
        background: #fff;
    }

    svg {
        justify-self: end;
        margin: 0 6px 4px 0;
        pointer-events: none;
    }
`;

const Footer = styled.div`
    display: flex;
    justify-content: flex-end;
    gap: 10px;
`;

const Preview = styled.div`
    flex: 1;
    min-width: 0;
    display: flex;

    svg {
        width: 100%;
        height: 100%;
    }
`;

const items = [
    { name: 'PV Area', open: true, on: true },
    { name: 'PV Area', child: true, on: true },
    { name: 'Row', on: true },
    { name: 'Row pitch', on: false },
    { name: 'Frame', on: true },
    { name: 'Pile', on: true },
];

const Segmented = ({ name, options, value, onChange, width }) => (
    <Segments $width={width} role="radiogroup" aria-label={name}>
        {options.map((option) => (
            <label key={option}>
                <input type="radio" name={name} checked={value === option} onChange={() => onChange(option)} />
                {option}
            </label>
        ))}
    </Segments>
);

const Order = ({ id, label, options }) => (
    <Field>
        <label htmlFor={id}>{label}</label>
        <SelectBox>
            <select id={id}>
                {options.map((option) => <option key={option}>{option}</option>)}
            </select>
            <svg width="6" height="5"><path d="M.5.500L3 3.500 5.500.500" fill="none" stroke="#55595d" strokeWidth="1.200" /></svg>
        </SelectBox>
    </Field>
);

const FrameModules = ({ x, label, labelX, labelW, color }) => (
    <g>
        <rect x={x} y="488" width="235" height="115" fill="#aedcff" />
        <path
            d={`M${x} 488h235v115h-235z` + Array.from({ length: 8 }, (_, i) => `M${x + Math.round((i + 1) * 26.1)} 488v115`).join('')}
            fill="none"
            stroke="#1d3348"
            strokeWidth="1.300"
        />
        <path d={`M${x} 545.500h235`} stroke="#0b2038" strokeWidth="1.200" />
        <rect x={labelX} y="532" width={labelW} height="24" fill="#fff" opacity=".85" />
        <text x={labelX + labelW / 2} y="551" textAnchor="middle" fill={color}>{label}</text>
    </g>
);

const LayoutPreview = () => (
    <Preview>
        <svg viewBox="345 148 670 734" role="img" aria-label="Labeling preview">
            <g fontSize="17" fontWeight="600" fill="#0c0c10">
                <text x="375" y="412">AREA1</text>
                <rect x="370" y="423" width="627" height="191" fill="none" stroke="#f2cb74" strokeWidth="2" />
                <text x="715" y="477" textAnchor="middle">ROW1-FRAME1</text>
                <text x="395" y="552">ROW1</text>
                <path d="M462 488.500h-5v115h5" fill="none" stroke="#4c4f55" strokeWidth="1.300" />
                <FrameModules x={471} label="ROW1-FRAME1-1" labelX={521} labelW={138} color="#0c0c10" />
                <FrameModules x={746} label="ROW1-FRAME1-2" labelX={795} labelW={140} color="#5c5c70" />
                <path d="M706 545.500h40" stroke="#111" strokeWidth="1.300" />
                <rect x="719" y="537" width="14" height="18" fill="#080808" />
            </g>
            <path d="M961 852h26M974 839v26" stroke="#111" strokeWidth="1.500" />
            <path d="M960 852l4-2.500v5zM988 852l-4-2.500v5zM974 838l-2.500 4h5zM974 866l-2.500-4h5z" fill="#111" />
            <circle cx="951" cy="852" r="5" fill="#c8401c" />
            <circle cx="996" cy="852" r="5" fill="#dcd416" />
            <g fontSize="8" fontWeight="700" textAnchor="middle">
                <text x="951" y="855" fill="#fff">N</text>
                <text x="996" y="855" fill="#5c5a10">S</text>
            </g>
        </svg>
    </Preview>
);

const LabelingPalette = () => {
    const [mode, setMode] = useState('Mechanical');
    const [continuous, setContinuous] = useState('On');

    return (
        <Palette>
            <PaletteBar>
                <IconButton type="button" aria-label="Close palette">
                    <svg width="9" height="9"><path d="M1 1l7 7M8 1L1 8" stroke="#e4e8ea" strokeWidth="1.800" /></svg>
                </IconButton>
                <PaletteTitle>LABELING</PaletteTitle>
                <svg width="16" height="14">
                    <path d="M8 0v14M4 3v10M12 3v10M1 6v4M15 6v4" stroke="#dfe3e6" strokeWidth="2.500" strokeDasharray="2.500 2" />
                </svg>
            </PaletteBar>
            <Side>
                <Split>
                    <ButtonWithCursor>
                        <Button type="button" $width={98} $tone="hover">Select areas</Button>
                        <svg width="13" height="20" aria-hidden="true">
                            <path d="M1 1v15l3.500-3 2.500 6 2.500-1-2.500-6H12z" fill="#fff" stroke="#222" />
                        </svg>
                    </ButtonWithCursor>
                    <Button type="button" $width={90} $tone="pressed">Hide Preview</Button>
                </Split>
                <Split>
                    <span>Labeling mode</span>
                    <Segmented name="Labeling mode" options={['Mechanical', 'Electrical']} value={mode} onChange={setMode} width={180} />
                </Split>
                <Heading $spaced>Label visibility</Heading>
                <Tree>
                    {items.map(({ name, open, child, on }, i) => (
                        <TreeRow key={i} $child={child}>
                            {child ? (
                                <svg width="10" height="13" aria-hidden="true">
                                    <path d="M2 0v13M8 0v13" stroke="#55555e" strokeWidth="3" strokeDasharray="3 2" />
                                </svg>
                            ) : (
                                <Toggle type="button" $open={open} aria-label={`${open ? 'Collapse' : 'Expand'} ${name}`}>
                                    <svg width="8" height="8">
                                        <path d={open ? 'M0 4h8' : 'M0 4h8M4 0v8'} stroke="currentColor" strokeWidth="2" />
                                    </svg>
                                </Toggle>
                            )}
                            <Name>{name}</Name>
                            {!child && <FontButton type="button">Aa</FontButton>}
                            <BulbButton type="button" aria-label={`Toggle ${name}`}><TreeBulb on={on} /></BulbButton>
                        </TreeRow>
                    ))}
                </Tree>
                <Numbering>
                    <Heading>Numbering</Heading>
                    <Order id="horizontal" label="Horizontal numbering order" options={['Right to left', 'Left to right']} />
                    <Order id="vertical" label="Vertical numbering order" options={['Top to bottom', 'Bottom to top']} />
                    <Field>
                        <span>Continuous frame numbering</span>
                        <svg width="15" height="15" aria-hidden="true">
                            <circle cx="7.500" cy="7.500" r="6.800" fill="none" stroke="#5c7486" />
                            <path d="M7.500 6.500v4.500M7.500 4v1.300" stroke="#5c7486" strokeWidth="1.200" />
                        </svg>
                        <Segmented name="Continuous frame numbering" options={['Off', 'On']} value={continuous} onChange={setContinuous} width={90} />
                    </Field>
                </Numbering>
                <Footer>
                    <Button type="button" $width={95} disabled>Remove labeling</Button>
                    <Button type="button" $width={95} disabled>Label area(s)</Button>
                </Footer>
            </Side>
            <LayoutPreview />
        </Palette>
    );
};

/* ---------- command line ---------- */

const CommandRow = styled.form`
    position: relative;
    width: 762px;
    height: 25px;
    margin-left: 456px;
    display: flex;
    background: #c0bdcc;
`;

const CommandTools = styled.div`
    width: 56px;
    padding: 0 4px 0 1px;
    display: flex;
    align-items: center;
    justify-content: space-between;
    background: #21262f;
`;

const CommandField = styled.label`
    flex: 1;
    padding: 0 4px;
    display: flex;
    align-items: center;
    gap: 6px;

    input {
        ${bare}
        flex: 1;
        outline: none;
        font-family: 'DejaVu Sans Mono', monospace;
        font-style: italic;
    }

    input::placeholder {
        color: #5d5c69;
        opacity: 1;
    }
`;

const CommandLine = () => (
    <CommandRow onSubmit={(e) => e.preventDefault()}>
        <CommandTools>
            <svg width="6" height="19"><path d="M1 0v19M5 0v19" stroke="#8f979c" strokeWidth="1.500" strokeDasharray="2 1" /></svg>
            <svg width="9" height="9"><path d="M1 1l7 7M8 1L1 8" stroke="#d4d8dc" strokeWidth="1.800" /></svg>
            <svg width="16" height="16">
                <path d="M2 14l8-8" stroke="#c2c6cc" strokeWidth="3" strokeLinecap="round" />
                <path d="M14.500 3.500L12 6l-2-2 2.500-2.500a4 4 0 0 0-4 5.500l1 1a4 4 0 0 0 5-4.500z" fill="#c2c6cc" />
            </svg>
        </CommandTools>
        <CommandField>
            <svg width="26" height="13">
                <path d="M1 1h14v11H1z" fill="none" stroke="#4d4f5c" strokeWidth="1.400" />
                <path d="M3 4l3 2.500L3 9M8 9.500h4" fill="none" stroke="#4d4f5c" strokeWidth="1.200" />
                <path d="M19 4.500h7L22.500 9z" fill="#4d4f5c" />
            </svg>
            <input type="text" aria-label="Command" placeholder="Type a command" />
            <svg width="8" height="5"><path d="M0 5l4-5 4 5z" fill="#4d4f5c" /></svg>
        </CommandField>
    </CommandRow>
);

const App = () => (
    <Page>
        <GlobalStyle />
        <TopEdge />
        <RibbonBar />
        <TabStrip />
        <Workspace>
            <Drawing />
            <LabelingPalette />
            <CommandLine />
        </Workspace>
    </Page>
);

export default App;
